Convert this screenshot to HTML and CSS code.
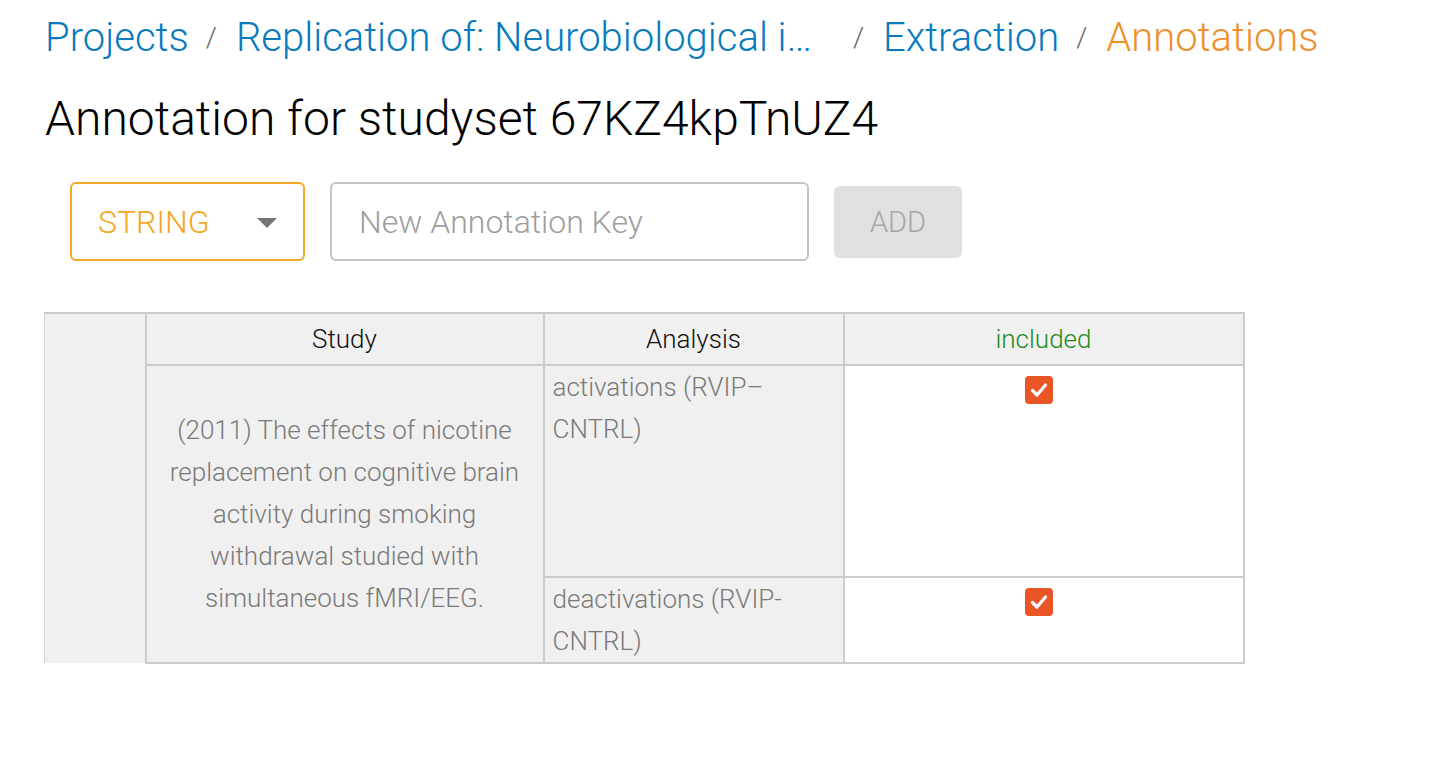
FILE: index.html
```html
<!DOCTYPE html>
<html>
<head>
<meta charset="utf-8">
<link rel="stylesheet" href="styles.css">
</head>
<body>
<div class="page">
  <nav class="crumbs">
    <a class="crumb">Projects</a>
    <span class="sep">/</span>
    <a class="crumb trunc">Replication of: Neurobiological impact of something</a>
    <span class="sep">/</span>
    <a class="crumb">Extraction</a>
    <span class="sep">/</span>
    <span class="crumb current">Annotations</span>
  </nav>
  <h1 class="title">Annotation for studyset 67KZ4kpTnUZ4</h1>
  <div class="controls">
    <div class="select">
      <span>STRING</span>
      <svg class="caret" width="20" height="10" viewBox="0 0 20 10"><path d="M0 0h20L10 10z" fill="#757575"/></svg>
    </div>
    <div class="input">New Annotation Key</div>
    <div class="add">ADD</div>
  </div>
  <table class="grid">
    <tr class="head">
      <td class="rowhead" rowspan="3"></td>
      <th class="c-study">Study</th>
      <th class="c-analysis">Analysis</th>
      <th class="c-inc inc">included</th>
    </tr>
    <tr class="r1">
      <td class="study" rowspan="2">(2011) The effects of nicotine replacement on cognitive brain activity during smoking withdrawal studied with simultaneous fMRI/EEG.</td>
      <td class="analysis">activations (RVIP–<br>CNTRL)</td>
      <td class="check"><span class="box"><svg width="18" height="16" viewBox="0 0 18 16"><path d="M2.5 8.5l4.5 4.5L15.5 3" fill="none" stroke="#fff" stroke-width="3.2" stroke-linecap="round" stroke-linejoin="round"/></svg></span></td>
    </tr>
    <tr class="r2">
      <td class="analysis">deactivations (RVIP-<br>CNTRL)</td>
      <td class="check"><span class="box"><svg width="18" height="16" viewBox="0 0 18 16"><path d="M2.5 8.5l4.5 4.5L15.5 3" fill="none" stroke="#fff" stroke-width="3.2" stroke-linecap="round" stroke-linejoin="round"/></svg></span></td>
    </tr>
  </table>
</div>
</body>
</html>
```
FILE: styles.css
```css
* { box-sizing: border-box; }
html, body { margin: 0; background: #fff; }
body { font-family: Roboto, "Liberation Sans", sans-serif; font-weight: 300; }
.page { padding: 10px 45px 0 45px; }

.crumbs { display: flex; align-items: center; font-size: 40px; line-height: 56px; height: 56px; }
.crumb { color: #0a7abf; white-space: nowrap; }
.crumb.trunc { display: inline-block; width: 600px; overflow: hidden; text-overflow: ellipsis; padding-right: 16px; }
.crumb.current { color: #f0902c; }
.sep { color: #666; font-size: 28px; margin: 0 19px 0 17px; }

.title { font-size: 48px; font-weight: 300; margin: 18px 0 0; line-height: 70px; color: #000; }

.controls { display: flex; align-items: center; gap: 25px; margin: 28px 0 0 25px; }
.select { width: 235px; height: 79px; border: 2px solid #f5a623; border-radius: 6px; display: flex; align-items: center; justify-content: space-between; padding: 0 26px 0 26px; color: #f5a623; font-size: 32px; }
.caret { margin-top: 2px; }
.input { width: 479px; height: 79px; border: 2px solid #c4c4c4; border-radius: 6px; display: flex; align-items: center; padding-left: 27px; color: #9e9e9e; font-size: 32px; }
.add { width: 128px; height: 72px; background: #e0e0e0; border-radius: 6px; display: flex; align-items: center; justify-content: center; color: #a6a6a6; font-size: 29px; font-weight: 300; }

.grid { border-collapse: collapse; margin-top: 51px; margin-left: -1px; font-size: 26px; line-height: 42px; }
.grid th, .grid td { border: 2px solid #cccccc; padding: 0; }
.grid th { background: #f0f0f0; color: #111; font-weight: 300; height: 52px; text-align: center; }
.grid th.inc { color: #228b1c; }
.rowhead { width: 101px; background: #f0f0f0; border-bottom: none !important; border-left: 1px solid #d4d4d4 !important; }
.c-study { width: 398px; }
.c-analysis { width: 300px; }
.c-inc { width: 400px; }
.study { background: #f0f0f0; color: #7a7a7a; text-align: center; vertical-align: middle; padding: 0 20px !important; }
.analysis { background: #f0f0f0; color: #7a7a7a; vertical-align: top; padding: 0 8px !important; }
.r1 td.analysis, .r1 td.check { height: 212px; }
.r2 td { height: 86px; }
.check { background: #fff; vertical-align: top; text-align: center; line-height: 0; padding: 10px 10px 0 0 !important; }
.box { display: inline-flex; width: 28px; height: 28px; border-radius: 4px; background: #e95525; align-items: center; justify-content: center; }
```
